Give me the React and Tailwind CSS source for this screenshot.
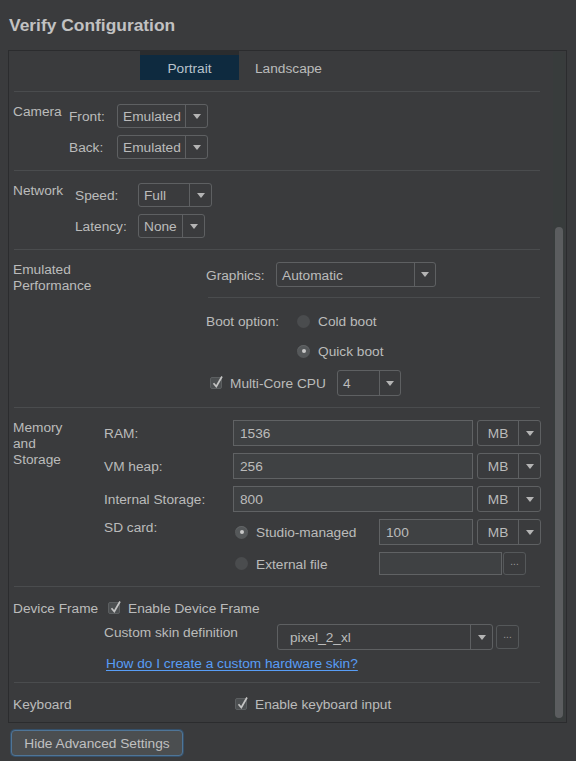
import React from "react";

const Tri = () => (
  <svg width="8" height="5" viewBox="0 0 8 5">
    <path d="M0 0 H8 L4 5 Z" fill="#b4b4b4" />
  </svg>
);

function Combo({ text, w, h = "h-[24px]", aw = "w-[22px]", pl = "pl-[5px]" }) {
  return (
    <div className={`flex ${h} ${w} shrink-0 rounded-[3px] border border-[#5e6062]`}>
      <div className={`flex flex-1 items-center ${pl} pt-[2px] text-[#bbbbbb]`}>{text}</div>
      <div className={`flex ${aw} items-center justify-center border-l border-[#5e6062]`}>
        <Tri />
      </div>
    </div>
  );
}

function Unit() {
  return (
    <div className="flex h-[26px] w-[64px] shrink-0 rounded-[3px] border border-[#5e6062]">
      <div className="flex flex-1 items-center justify-center pt-[2px]">MB</div>
      <div className="flex w-[22px] items-center justify-center border-l border-[#5e6062]">
        <Tri />
      </div>
    </div>
  );
}

function Field({ text, w, h = "h-[26px]" }) {
  return (
    <div className={`flex ${h} ${w} shrink-0 items-center border border-[#606264] bg-[#3f4143] pl-[6px] pt-[2px]`}>
      {text}
    </div>
  );
}

function Dots({ h = "h-[23px]" }) {
  return (
    <div className={`flex ${h} w-[23px] shrink-0 items-center justify-center rounded-[3px] border border-[#55585a] pb-[4px] text-[10px] text-[#9a9a9a]`}>
      ...
    </div>
  );
}

function Radio({ on }) {
  return (
    <div
      className={`flex h-[13px] w-[13px] shrink-0 items-center justify-center rounded-full ${
        on ? "bg-[#55585a] shadow-[inset_0_1px_0_#626466]" : "bg-[#4a4c4e]"
      }`}
    >
      {on && <div className="h-[4px] w-[4px] rounded-full bg-[#c9c9c9]" />}
    </div>
  );
}

function Check() {
  return (
    <div className="relative h-[12px] w-[12px] shrink-0 rounded-[2px] border border-[#5c5f61] bg-[#4c4f51]">
      <svg className="absolute left-[1px] top-[-3px]" width="12" height="14" viewBox="0 0 12 14">
        <path d="M1.5 8.2 L4.3 11.5 L10 1.5" fill="none" stroke="#c4c4c4" strokeWidth="1.7" />
      </svg>
    </div>
  );
}

const T = ({ className = "", children }) => (
  <div className={`relative top-px ${className}`}>{children}</div>
);

const Sep = () => <div className="ml-[5px] h-px w-[526px] bg-[#4a4c4e]" />;

export default function App() {
  return (
    <div
      className="h-[761px] w-[576px] overflow-hidden bg-[#3a3b3d] text-[13.7px] leading-[16px] text-[#bbbbbb]"
      style={{ fontFamily: '"Liberation Sans", Arial, sans-serif' }}
    >
      <div className="h-[50px] pl-[9px] pt-[15px] text-[17.4px] font-bold leading-[20px] text-[#c2c2c2]">
        Verify Configuration
      </div>

      <div className="ml-[8px] flex h-[673px] w-[559px] overflow-hidden border border-[#2b2c2e]">
        <div className="w-[544px] shrink-0">
          {/* tabs */}
          <div className="flex h-[40px] items-start">
            <div className="ml-[131px] flex h-[29px] w-[99px] items-center justify-center border-t-4 border-[#2a2c2e] bg-[#0e2a3f] pt-[2px] text-[#b9c3cc]">
              Portrait
            </div>
            <div className="ml-[16px] flex h-[29px] items-center pt-[7px]">Landscape</div>
          </div>
          <Sep />

          {/* camera */}
          <div className="flex h-[78px] pl-[4px]">
            <div className="w-[56px] pt-[12px]">Camera</div>
            <div className="flex flex-col gap-[7px] pt-[12px]">
              <div className="flex h-[24px] items-center">
                <T className="w-[48px]">Front:</T>
                <Combo text="Emulated" w="w-[91px]" />
              </div>
              <div className="flex h-[24px] items-center">
                <T className="w-[48px]">Back:</T>
                <Combo text="Emulated" w="w-[91px]" />
              </div>
            </div>
          </div>
          <Sep />

          {/* network */}
          <div className="flex h-[78px] pl-[4px]">
            <div className="w-[62px] pt-[12px]">Network</div>
            <div className="flex flex-col gap-[7px] pt-[12px]">
              <div className="flex h-[24px] items-center">
                <T className="w-[63px]">Speed:</T>
                <Combo text="Full" w="w-[74px]" />
              </div>
              <div className="flex h-[24px] items-center">
                <T className="w-[63px]">Latency:</T>
                <Combo text="None" w="w-[67px]" />
              </div>
            </div>
          </div>
          <Sep />

          {/* emulated performance */}
          <div className="flex h-[157px] pl-[4px]">
            <div className="w-[193px] pt-[12px]">
              <div>Emulated</div>
              <div>Performance</div>
            </div>
            <div className="flex flex-col pt-[12px]">
              <div className="flex h-[25px] items-center">
                <T className="w-[70px]">Graphics:</T>
                <Combo text="Automatic" w="w-[160px]" h="h-[25px]" aw="w-[21px]" />
              </div>
              <div className="ml-[2px] mt-[10px] h-px w-[332px] bg-[#4a4c4e]" />
              <div className="mt-[11px] flex h-[24px] items-center">
                <T className="w-[91px]">Boot option:</T>
                <Radio />
                <T className="ml-[8px]">Cold boot</T>
              </div>
              <div className="mt-[6px] flex h-[24px] items-center pl-[91px]">
                <Radio on />
                <T className="ml-[8px]">Quick boot</T>
              </div>
              <div className="mt-[7px] flex h-[26px] items-center pl-[4px]">
                <Check />
                <T className="ml-[8px] w-[107px]">Multi-Core CPU</T>
                <Combo text="4" w="w-[64px]" h="h-[26px]" aw="w-[21px]" />
              </div>
            </div>
          </div>
          <Sep />

          {/* memory */}
          <div className="flex h-[178px] pl-[4px]">
            <div className="w-[91px] pt-[12px]">
              <div>Memory</div>
              <div>and</div>
              <div>Storage</div>
            </div>
            <div className="flex flex-col gap-[7px] pt-[12px]">
              {[
                ["RAM:", "1536"],
                ["VM heap:", "256"],
                ["Internal Storage:", "800"],
              ].map(([l, v]) => (
                <div key={l} className="flex h-[26px] items-center">
                  <T className="w-[129px]">{l}</T>
                  <Field text={v} w="w-[240px]" />
                  <div className="ml-[4px]">
                    <Unit />
                  </div>
                </div>
              ))}
              <div className="flex h-[26px] items-start">
                <div className="w-[129px] pt-px">SD card:</div>
                <div className="flex h-[26px] items-center">
                  <div className="ml-[2px]">
                    <Radio on />
                  </div>
                  <T className="ml-[8px] w-[123px]">Studio-managed</T>
                  <Field text="100" w="w-[94px]" />
                  <div className="ml-[4px]">
                    <Unit />
                  </div>
                </div>
              </div>
              <div className="flex h-[23px] items-center">
                <div className="w-[129px]" />
                <div className="ml-[2px]">
                  <Radio />
                </div>
                <T className="ml-[8px] w-[123px]">External file</T>
                <Field text="" w="w-[123px]" h="h-[23px]" />
                <div className="ml-[1px]">
                  <Dots />
                </div>
              </div>
            </div>
          </div>
          <Sep />

          {/* device frame */}
          <div className="flex h-[95px] pl-[4px]">
            <div className="w-[91px] pt-[14px]">Device Frame</div>
            <div className="flex flex-col pt-[13px]">
              <div className="flex h-[16px] items-center pl-[4px]">
                <Check />
                <T className="ml-[8px]">Enable Device Frame</T>
              </div>
              <div className="mt-[8px] flex h-[26px] items-start">
                <div className="w-[173px] pt-px">Custom skin definition</div>
                <Combo text="pixel_2_xl" w="w-[216px]" h="h-[26px]" pl="pl-[12px]" />
                <div className="ml-[3px] mt-[1px]">
                  <Dots h="h-[24px]" />
                </div>
              </div>
              <div className="ml-[2px] mt-[6px] text-[#589df6] underline decoration-[#589df6] underline-offset-[2px]">
                How do I create a custom hardware skin?
              </div>
            </div>
          </div>
          <Sep />

          {/* keyboard */}
          <div className="flex h-[38px] pl-[4px] pt-[13px]">
            <T className="w-[222px]">Keyboard</T>
            <div className="flex h-[16px] items-center">
              <Check />
              <T className="ml-[8px]">Enable keyboard input</T>
            </div>
          </div>
        </div>

        {/* scrollbar */}
        <div className="mt-px flex h-[669px] w-[12px] shrink-0 flex-col justify-end bg-[#383c3c] px-[2px] pb-[3px]">
          <div className="h-[491px] w-[8px] rounded-[4px] bg-[#5b5d5f]" />
        </div>
      </div>

      <div className="ml-[11px] mt-[7px] flex h-[26px] w-[172px] items-center justify-center rounded-[4px] border border-[#4f7597] bg-[#4b4e50] pt-[2px] text-[#c0c0c0] shadow-[0_0_0_1px_#35506a]">
        Hide Advanced Settings
      </div>
    </div>
  );
}
